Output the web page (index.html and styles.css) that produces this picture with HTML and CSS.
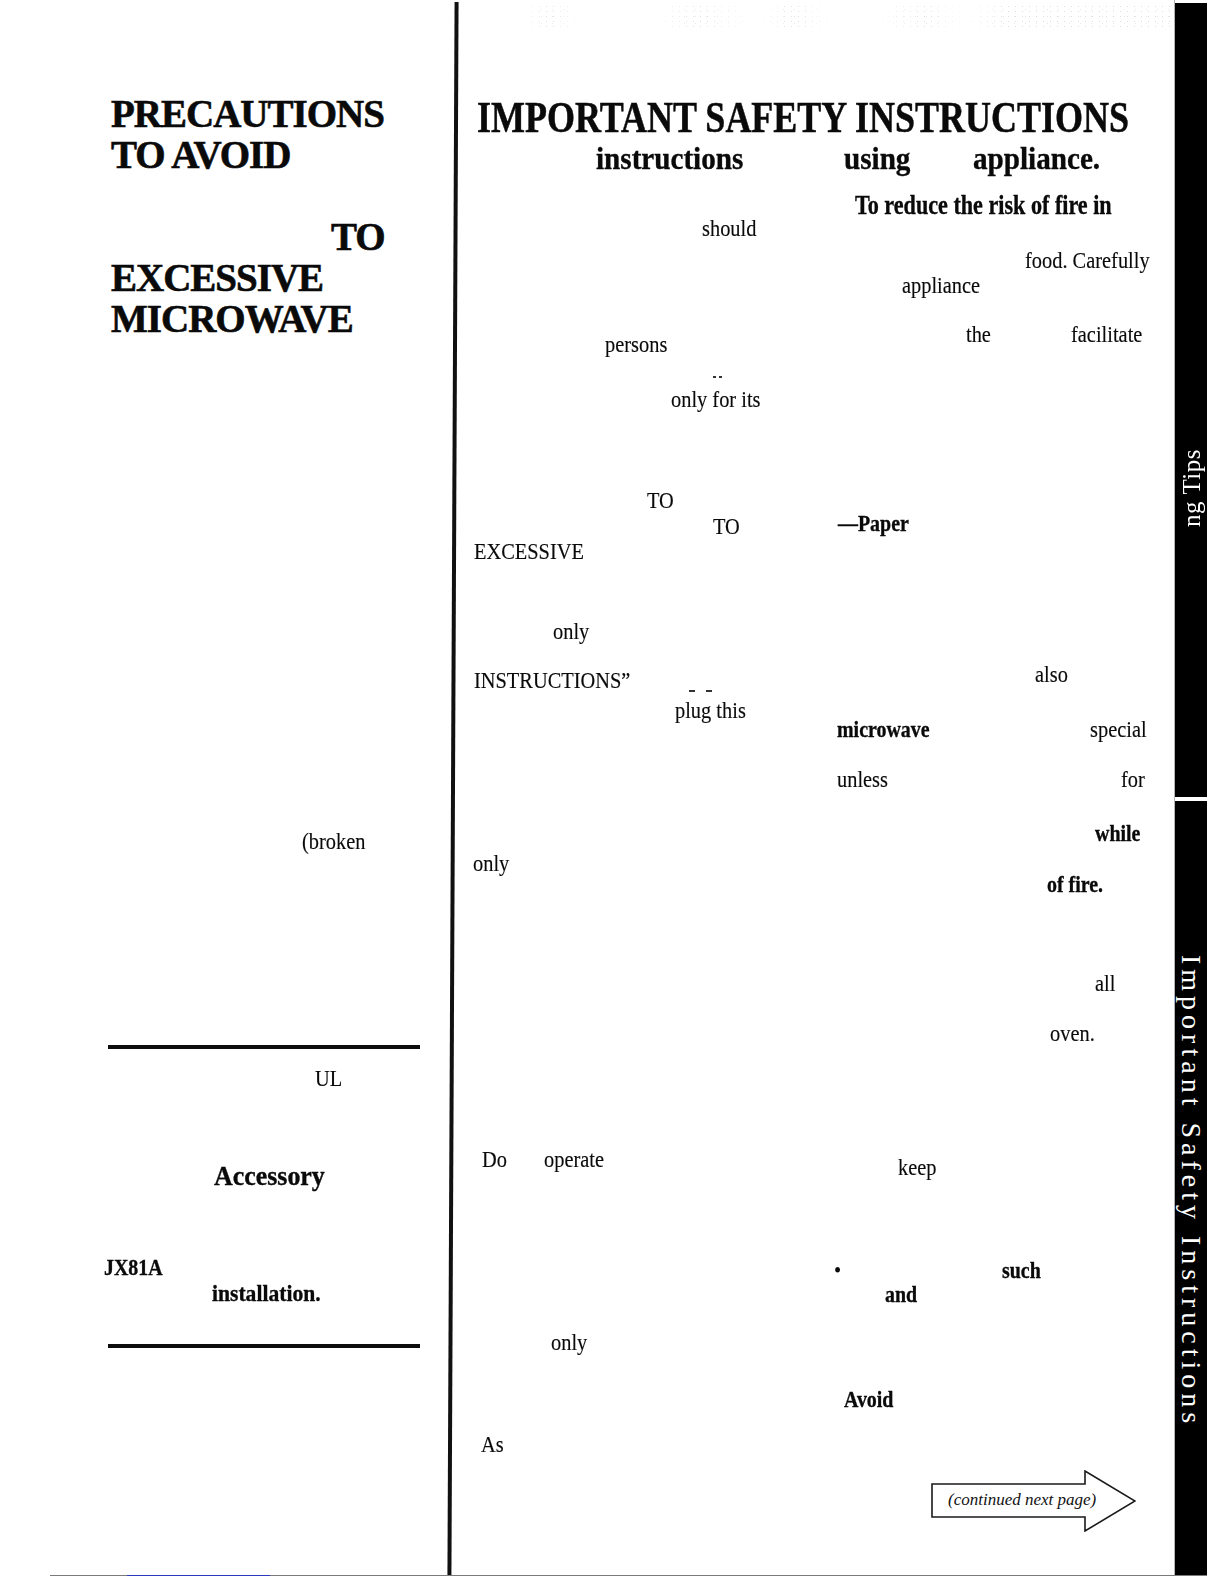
FILE: index.html
```html
<!DOCTYPE html>
<html lang="en">
<head>
<meta charset="utf-8">
<title>Important Safety Instructions</title>
<link rel="stylesheet" href="styles.css">
</head>
<body>
<div class="page">
  <div class="sheet">
    <section class="left">
      <h2 class="precautions">
        <div class="hl ml111">PRECAUTIONS</div>
        <div class="hl ml111">TO AVOID</div>
        <div class="hl"></div>
        <div class="hl ml331">TO</div>
        <div class="hl ml111">EXCESSIVE</div>
        <div class="hl ml111">MICROWAVE</div>
      </h2>
      <div class="ln mt490"><span class="ml302">(broken</span></div>
      <hr class="rule mt192">
      <div class="ln mt17"><span class="ml315">UL</span></div>
      <div class="ln ln-lg mt71"><span class="b wide ml214">Accessory</span></div>
      <div class="ln mt64"><span class="b ml104">JX81A</span></div>
      <div class="ln mt2"><span class="b w90 ml212">installation.</span></div>
      <hr class="rule mt39">
    </section>

    <div class="vrule"></div>

    <section class="right">
      <div class="noise"></div>
      <h1 class="title">IMPORTANT SAFETY INSTRUCTIONS</h1>
      <div class="ln ln-sub"><span class="b ml139">instructions</span><span class="b ml387">using</span><span class="b ml516">appliance.</span></div>
      <div class="subcols">
        <div class="colA">
          <div class="ln mt36"><span class="ml245">should</span></div>
          <div class="ln mt92"><span class="ml148">persons</span></div>
          <div class="ln mt31"><span class="ticks t-small ml256 up11"></span><span class="ml214">only for its</span></div>
          <div class="ln mt77"><span class="ml190">TO</span></div>
          <div class="ln mt2"><span class="ml256">TO</span></div>
          <div class="ln mt1"><span class="ml17">EXCESSIVE</span></div>
          <div class="ln mt56"><span class="ml96">only</span></div>
          <div class="ln mt25"><span class="ml17">INSTRUCTIONS”</span></div>
          <div class="ln mt6"><span class="ticks t-wide ml232 up8"></span><span class="ml218">plug this</span></div>
          <div class="ln mt129"><span class="ml16">only</span></div>
          <div class="ln mt272"><span class="ml25">Do</span><span class="ml87">operate</span></div>
          <div class="ln mt159"><span class="ml94">only</span></div>
          <div class="ln mt78"><span class="ml24">As</span></div>
        </div>
        <div class="colB">
          <div class="ln ln-lg mt10"><span class="b ml30">To reduce the risk of fire in</span></div>
          <div class="ln mt28"><span class="ml200">food. Carefully</span></div>
          <div class="ln mt1"><span class="ml77">appliance</span></div>
          <div class="ln mt25"><span class="ml141">the</span><span class="ml246">facilitate</span></div>
          <div class="ln mt165"><span class="b ml13">—Paper</span></div>
          <div class="ln mt127"><span class="ml210">also</span></div>
          <div class="ln mt31"><span class="b ml12">microwave</span><span class="ml265">special</span></div>
          <div class="ln mt26"><span class="ml12">unless</span><span class="ml296">for</span></div>
          <div class="ln mt30"><span class="b ml270">while</span></div>
          <div class="ln mt27"><span class="b ml222">of fire.</span></div>
          <div class="ln mt75"><span class="ml270">all</span></div>
          <div class="ln mt26"><span class="ml225">oven.</span></div>
          <div class="ln mt110"><span class="ml73">keep</span></div>
          <div class="ln mt79"><span class="ml9">•</span><span class="b ml177">such</span></div>
          <div class="ln"><span class="b ml60">and</span></div>
          <div class="ln mt81"><span class="b ml19">Avoid</span></div>
          <div class="arrow mt59 ml105">
            <svg class="arrow-shape" width="206" height="62" viewBox="0 0 206 62" aria-hidden="true">
              <path d="M2 14 H155 V1 L205 31 L155 61 V47 H2 Z" fill="#fff" stroke="#1a1a1a" stroke-width="1.6" stroke-linejoin="miter"/>
            </svg>
            <span class="arrow-label">(continued next page)</span>
          </div>
        </div>
      </div>
    </section>

    <aside class="tab">
      <div class="tab-seg tab-top"><div class="tab-text tab-text-up">ng Tips</div></div>
      <div class="tab-seg tab-bottom"><div class="tab-text">Important Safety Instructions</div></div>
    </aside>
  </div>
  <div class="footline"><div class="footline-blue"></div></div>
</div>
</body>
</html>
```

FILE: styles.css
```css
* { box-sizing: border-box; margin: 0; padding: 0; }

html, body { background: #fff; }

body {
  width: 1224px;
  height: 1584px;
  overflow: hidden;
  font-family: "Liberation Serif", "Times New Roman", serif;
  color: #0a0a0a;
}

.page { width: 1224px; height: 1584px; }

.sheet { display: flex; height: 1575px; }

/* ---------- left column ---------- */
.left { width: 451px; flex: none; padding-top: 93px; }

.precautions {
  font-size: 39px;
  line-height: 41px;
  font-weight: bold;
  letter-spacing: -1px;
  -webkit-text-stroke: 0.6px #0a0a0a;
}
.hl { height: 41px; white-space: nowrap; }

.rule {
  border: 0;
  height: 4px;
  width: 312px;
  margin-left: 108px;
  background: #0d0d0d;
}

/* ---------- vertical rule (slightly skewed, as scanned) ---------- */
.vrule {
  width: 4px;
  flex: none;
  margin-top: 2px;
  background: #111;
  transform: rotate(0.26deg);
}

/* ---------- right column ---------- */
.right { width: 720px; flex: none; padding-left: 2px; }

.noise {
  width: 650px;
  height: 26px;
  margin: 4px 0 0 65px;
  background:
    radial-gradient(circle, rgba(120,120,120,.8) 0 0.6px, transparent 1px) 0 0 / 7px 5px,
    radial-gradient(circle, rgba(140,140,140,.7) 0 0.6px, transparent 1px) 3px 2px / 11px 7px;
  -webkit-mask-image: linear-gradient(90deg, transparent 0, #000 4%, transparent 9%, transparent 20%, #000 27%, transparent 36%, #000 42%, transparent 48%, transparent 54%, #000 62%, transparent 68%, #000 74%, #000 100%);
  mask-image: linear-gradient(90deg, transparent 0, #000 4%, transparent 9%, transparent 20%, #000 27%, transparent 36%, #000 42%, transparent 48%, transparent 54%, #000 62%, transparent 68%, #000 74%, #000 100%);
  opacity: .3;
}

.title {
  margin-top: 66px;
  margin-left: 20px;
  height: 44px;
  font-size: 44px;
  line-height: 44px;
  font-weight: bold;
  white-space: nowrap;
  transform-origin: 0 50%;
  transform: scaleX(.818);
  -webkit-text-stroke: 0.5px #0a0a0a;
}

.subcols { display: flex; margin-top: 4px; }
.colA { width: 368px; flex: none; }
.colB { width: 350px; flex: none; }

/* ---------- text lines ---------- */
.ln {
  display: grid;
  grid-template-columns: 100%;
  height: 24px;
  font-size: 24px;
  line-height: 24px;
}
.ln > span {
  grid-area: 1 / 1;
  justify-self: start;
  white-space: nowrap;
  transform-origin: 0 50%;
  transform: scaleX(.85);
  -webkit-text-stroke: 0.15px #0a0a0a;
}
.ln > .b { font-weight: bold; transform: scaleX(.83); -webkit-text-stroke: 0.35px #0a0a0a; }

.ln-lg { height: 30px; font-size: 27px; line-height: 30px; }
.ln-lg > .b { transform: scaleX(.82); }
.ln > .wide { transform: scaleX(.96); }
.ln > .w90 { transform: scaleX(.9); }

.ln-sub { height: 34px; font-size: 31px; line-height: 34px; margin-top: 2px; }
.ln-sub > .b { transform: scaleX(.94); }

.ln > .ticks { align-self: start; height: 2px; transform: none; -webkit-text-stroke: 0; }
.t-small { width: 9px; background: linear-gradient(90deg, #333 0 3px, transparent 3px 6px, #333 6px 9px); }
.t-wide { width: 23px; background: linear-gradient(90deg, #333 0 6px, transparent 6px 17px, #333 17px 23px); }
.up11 { margin-top: -11px; }
.up8 { margin-top: -8px; }

/* ---------- continued arrow ---------- */
.arrow { position: relative; width: 206px; height: 62px; }
.arrow-shape { display: block; }
.arrow-label {
  position: absolute;
  left: 18px;
  top: 19px;
  font-size: 17px;
  line-height: 22px;
  font-style: italic;
  color: #111;
  white-space: nowrap;
}

/* ---------- black side tab ---------- */
.tab {
  width: 32px;
  flex: none;
  display: flex;
  flex-direction: column;
  box-shadow: -1px 0 0 #b5b5b5;
}
.tab-seg { background: #000; overflow: hidden; }
.tab-top { height: 794px; margin-top: 3px; }
.tab-bottom { flex: 1; margin-top: 4px; }

.tab-text {
  writing-mode: vertical-rl;
  font-size: 28px;
  line-height: 12px;
  letter-spacing: 5px;
  color: #fff;
  white-space: nowrap;
  margin-top: 154px;
  margin-left: 10px;
}
.tab-text-up {
  font-size: 25px;
  letter-spacing: 0.5px;
  margin-top: 446px;
  margin-left: 11px;
  transform: rotate(180deg);
}

/* ---------- bottom scan line ---------- */
.footline { margin-left: 50px; width: 1157px; height: 1px; background: #7a7a7a; }
.footline-blue { margin-left: 77px; width: 143px; height: 1px; background: #2a3bbf; }

/* ---------- spacing utilities ---------- */
.mt1 { margin-top: 1px; }
.mt2 { margin-top: 2px; }
.mt6 { margin-top: 6px; }
.mt10 { margin-top: 10px; }
.mt17 { margin-top: 17px; }
.mt25 { margin-top: 25px; }
.mt26 { margin-top: 26px; }
.mt27 { margin-top: 27px; }
.mt28 { margin-top: 28px; }
.mt30 { margin-top: 30px; }
.mt31 { margin-top: 31px; }
.mt36 { margin-top: 36px; }
.mt39 { margin-top: 39px; }
.mt56 { margin-top: 56px; }
.mt59 { margin-top: 59px; }
.mt64 { margin-top: 64px; }
.mt71 { margin-top: 71px; }
.mt75 { margin-top: 75px; }
.mt77 { margin-top: 77px; }
.mt78 { margin-top: 78px; }
.mt79 { margin-top: 79px; }
.mt81 { margin-top: 81px; }
.mt92 { margin-top: 92px; }
.mt110 { margin-top: 110px; }
.mt127 { margin-top: 127px; }
.mt129 { margin-top: 129px; }
.mt159 { margin-top: 159px; }
.mt165 { margin-top: 165px; }
.mt192 { margin-top: 192px; }
.mt272 { margin-top: 272px; }
.mt490 { margin-top: 490px; }

.ml9 { margin-left: 9px; }
.ml12 { margin-left: 12px; }
.ml13 { margin-left: 13px; }
.ml16 { margin-left: 16px; }
.ml17 { margin-left: 17px; }
.ml19 { margin-left: 19px; }
.ml24 { margin-left: 24px; }
.ml25 { margin-left: 25px; }
.ml30 { margin-left: 30px; }
.ml60 { margin-left: 60px; }
.ml73 { margin-left: 73px; }
.ml77 { margin-left: 77px; }
.ml87 { margin-left: 87px; }
.ml94 { margin-left: 94px; }
.ml96 { margin-left: 96px; }
.ml104 { margin-left: 104px; }
.ml105 { margin-left: 105px; }
.ml111 { margin-left: 111px; }
.ml139 { margin-left: 139px; }
.ml141 { margin-left: 141px; }
.ml148 { margin-left: 148px; }
.ml177 { margin-left: 177px; }
.ml190 { margin-left: 190px; }
.ml200 { margin-left: 200px; }
.ml210 { margin-left: 210px; }
.ml212 { margin-left: 212px; }
.ml214 { margin-left: 214px; }
.ml218 { margin-left: 218px; }
.ml222 { margin-left: 222px; }
.ml225 { margin-left: 225px; }
.ml232 { margin-left: 232px; }
.ml245 { margin-left: 245px; }
.ml246 { margin-left: 246px; }
.ml256 { margin-left: 256px; }
.ml265 { margin-left: 265px; }
.ml270 { margin-left: 270px; }
.ml296 { margin-left: 296px; }
.ml302 { margin-left: 302px; }
.ml315 { margin-left: 315px; }
.ml331 { margin-left: 331px; }
.ml387 { margin-left: 387px; }
.ml516 { margin-left: 516px; }
```
